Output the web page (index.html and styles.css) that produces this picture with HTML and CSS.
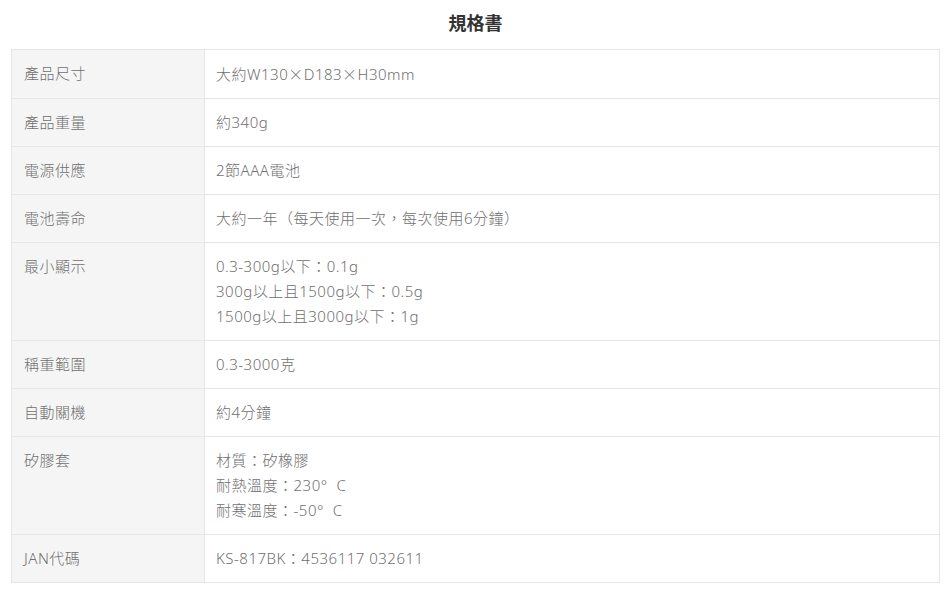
FILE: index.html
```html
<!DOCTYPE html>
<html lang="zh-Hant">
<head>
<meta charset="utf-8">
<link rel="stylesheet" href="styles.css">
</head>
<body>
<div class="page">
  <h2 class="title">規格書</h2>
  <table class="spec">
    <tr><th>產品尺寸</th><td>大約W130<span class="cjk">×</span>D183<span class="cjk">×</span>H30mm</td></tr>
    <tr><th>產品重量</th><td>約340g</td></tr>
    <tr><th>電源供應</th><td>2節AAA電池</td></tr>
    <tr><th>電池壽命</th><td>大約一年（每天使用一次，每次使用6分鐘）</td></tr>
    <tr><th>最小顯示</th><td>0.3-300g以下：0.1g<br>300g以上且1500g以下：0.5g<br>1500g以上且3000g以下：1g</td></tr>
    <tr><th>稱重範圍</th><td>0.3-3000克</td></tr>
    <tr><th>自動關機</th><td>約4分鐘</td></tr>
    <tr><th>矽膠套</th><td>材質：矽橡膠<br>耐熱溫度：230°&nbsp;&nbsp;C<br>耐寒溫度：-50°&nbsp;&nbsp;C</td></tr>
    <tr><th>JAN代碼</th><td>KS-817BK：4536117 032611</td></tr>
  </table>
</div>
</body>
</html>
```
FILE: styles.css
```css
html, body {
  margin: 0;
  padding: 0;
  background: #fff;
}
.page {
  padding: 0 10px 0 11px;
  font-family: "Noto Sans", "Noto Sans CJK JP", "Noto Sans CJK TC", sans-serif;
  color: #707070;
}
.title {
  margin: 0;
  height: 49px;
  line-height: 44px;
  text-align: center;
  font-size: 18px;
  font-weight: 700;
  color: #333;
  font-family: "Noto Sans CJK JP", sans-serif;
}
.spec {
  width: 100%;
  border-collapse: collapse;
  font-size: 15px;
  line-height: 25px;
  letter-spacing: 0.5px;
}
.spec th, .spec td {
  border: 1px solid #e6e6e6;
  padding: 11px 12px 11px 12px;
  text-align: left;
  vertical-align: top;
  font-weight: 300;
}
.spec th {
  width: 168px;
  background: #f5f5f5;
}
.spec td {
  padding-left: 11px;
}
.cjk {
  font-family: "Noto Sans CJK JP", sans-serif;
}
```
